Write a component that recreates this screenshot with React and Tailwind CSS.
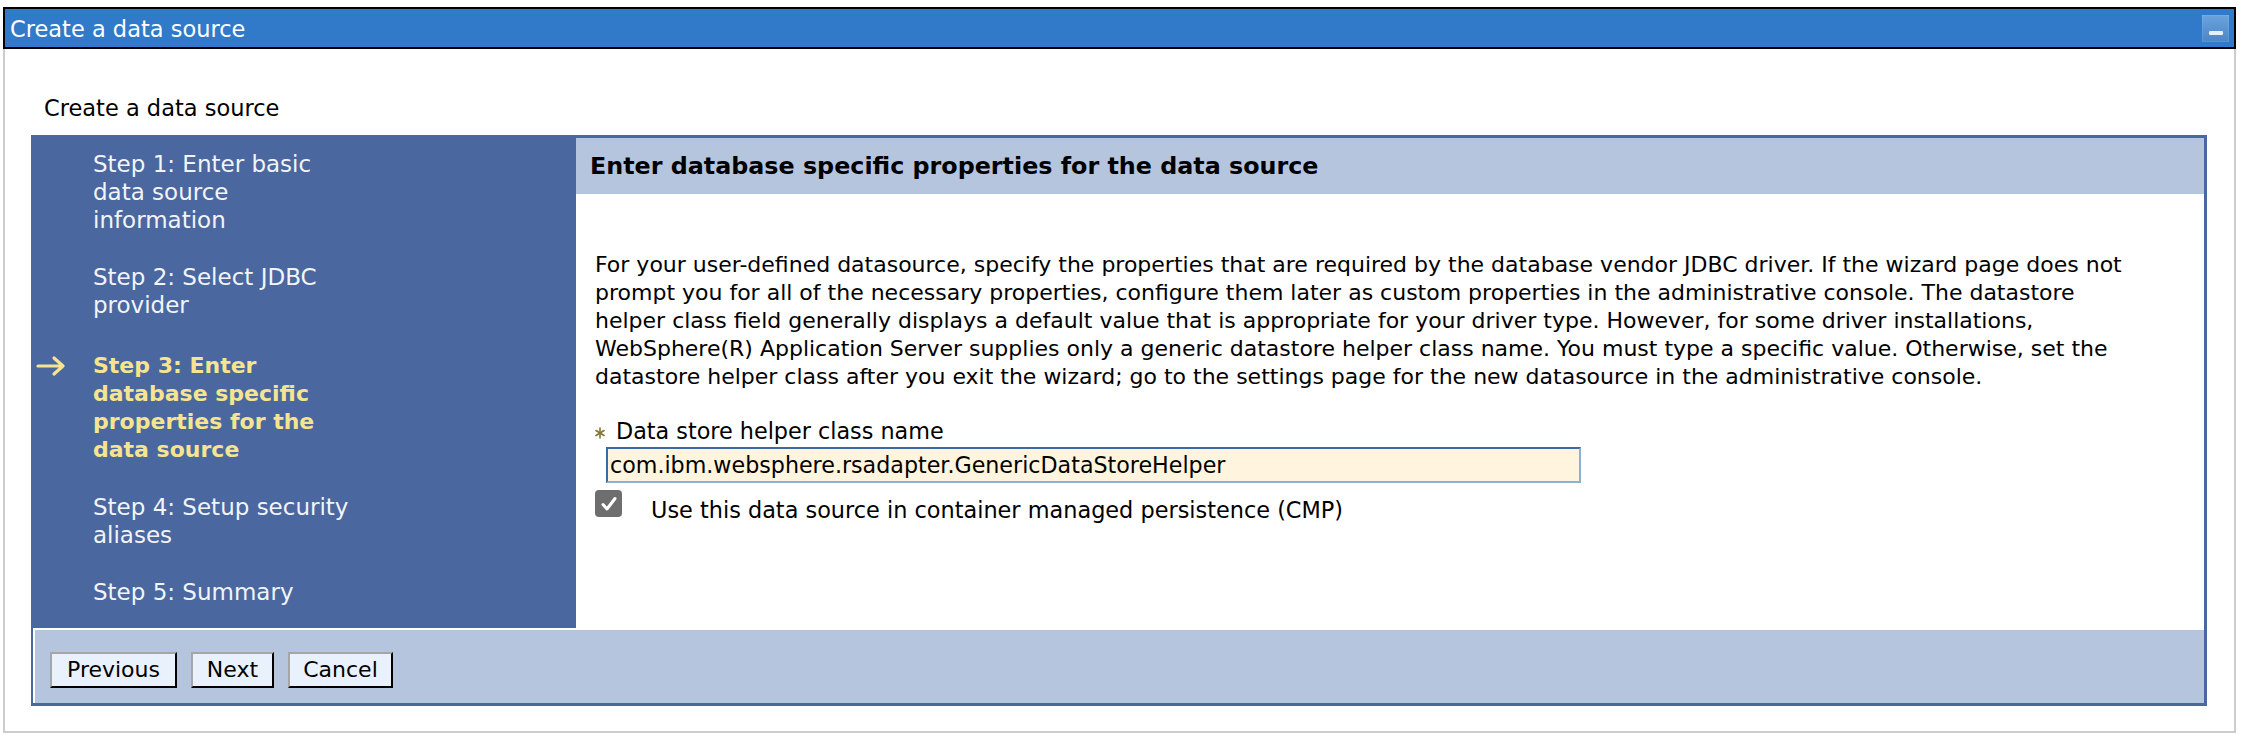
import React from "react";

const FONT = { fontFamily: '"DejaVu Sans", Verdana, sans-serif' };

function Step({ lines, active, extra }) {
  return (
    <div className={`relative mb-[29px] last:mb-0 ${extra || ""}`}>
      {active && (
        <svg
          className="absolute left-[-57px] top-[7px]"
          width="31"
          height="22"
          viewBox="0 0 31 22"
        >
          <path
            d="M2 11 H27 M18 3 L27 11 L18 19"
            fill="none"
            stroke="#f6e48f"
            strokeWidth="3.2"
            strokeLinecap="round"
            strokeLinejoin="round"
          />
        </svg>
      )}
      {lines.map((l, i) => (
        <div
          key={i}
          className={
            active
              ? "whitespace-nowrap text-[22px] font-bold text-[#f6e48f]"
              : "whitespace-nowrap text-[23px] text-[#f2f4f8]"
          }
        >
          {l}
        </div>
      ))}
    </div>
  );
}

function Btn({ children, w }) {
  return (
    <button
      className={`h-[36px] ${w} border-2 border-t-[#a6a6a6] border-l-[#a6a6a6] border-b-black border-r-black bg-[#e9f1fd] text-[22px] leading-[28px] text-black`}
      style={FONT}
    >
      {children}
    </button>
  );
}

export default function App() {
  const para = [
    "For your user-defined datasource, specify the properties that are required by the database vendor JDBC driver. If the wizard page does not",
    "prompt you for all of the necessary properties, configure them later as custom properties in the administrative console. The datastore",
    "helper class field generally displays a default value that is appropriate for your driver type. However, for some driver installations,",
    "WebSphere(R) Application Server supplies only a generic datastore helper class name. You must type a specific value. Otherwise, set the",
    "datastore helper class after you exit the wizard; go to the settings page for the new datasource in the administrative console.",
  ];
  return (
    <div className="min-h-[738px] bg-white pt-[7px] pl-[3px]" style={FONT}>
      <div className="w-[2233px]">
        {/* Title bar */}
        <div className="relative flex h-[42px] items-center border-2 border-black bg-[#3179c9] pl-[5px]">
          <span className="mt-[2px] text-[22.5px] leading-[28px] text-white">Create a data source</span>
          <div className="absolute right-[5px] top-[6px] flex h-[27px] w-[27px] items-end justify-center bg-gradient-to-b from-[#6aa2dc] to-[#4a86c8] pb-[7px] shadow-[inset_0_0_2px_rgba(255,255,255,0.35)]">
            <div className="h-[4px] w-[14px] rounded-[1px] bg-[#e6efff]" />
          </div>
        </div>

        {/* Body */}
        <div className="border-x-2 border-b-2 border-[#cccccc] pt-[45px] pb-[25px]">
          <div className="pl-[39px] text-[22.5px] leading-[28px] text-black">Create a data source</div>

          <div className="ml-[26px] mt-[13px] w-[2176px] border-[3px] border-l-2 border-[#4a67a0]">
            <div className="flex h-[490px]">
              {/* Nav */}
              <div className="w-[543px] shrink-0 bg-[#4a67a0] pl-[60px] pt-[12px] leading-[28px]">
                <Step lines={["Step 1: Enter basic", "data source", "information"]} />
                <Step lines={["Step 2: Select JDBC", "provider"]} />
                <Step
                  active
                  extra="pt-[4px]"
                  lines={["Step 3: Enter", "database specific", "properties for the", "data source"]}
                />
                <Step lines={["Step 4: Setup security", "aliases"]} />
                <Step lines={["Step 5: Summary"]} />
              </div>
              {/* Content */}
              <div className="flex-1 bg-white">
                <div className="flex h-[56px] items-center bg-[#b5c5de] pl-[14px]">
                  <span className="text-[23.8px] font-bold leading-[28px] text-black">
                    Enter database specific properties for the data source
                  </span>
                </div>
                <div className="pl-[19px] pt-[57px] text-[22px] leading-[28px] text-black">
                  {para.map((l, i) => (
                    <div key={i} className="whitespace-nowrap">
                      {l}
                    </div>
                  ))}
                  <div className="mt-[26px] flex items-center">
                    <svg width="10" height="12" viewBox="0 0 10 12" className="mr-[11px] mt-[4px]">
                      <g stroke="#857532" strokeWidth="1.6" strokeLinecap="round">
                        <line x1="5" y1="1" x2="5" y2="11" />
                        <line x1="1" y1="3.5" x2="9" y2="8.5" />
                        <line x1="1" y1="8.5" x2="9" y2="3.5" />
                      </g>
                    </svg>
                    <span className="text-[22.3px]">Data store helper class name</span>
                  </div>
                  <div className="ml-[11px] mt-[2px] flex h-[36px] w-[975px] items-center border-2 border-t-[#3b6aa3] border-l-[#3b6aa3] border-b-[#8eb0d4] border-r-[#8eb0d4] bg-[#fff5de] pl-[2px] text-[22.2px]">
                    com.ibm.websphere.rsadapter.GenericDataStoreHelper
                  </div>
                  <div className="mt-[7px] flex items-start">
                    <div className="flex h-[27px] w-[27px] items-center justify-center rounded-[4px] bg-[#6e6e6e]">
                      <svg width="18" height="16" viewBox="0 0 18 16">
                        <path
                          d="M3 8.5 L7 13 L15 2.5"
                          fill="none"
                          stroke="#ffffff"
                          strokeWidth="3"
                          strokeLinecap="round"
                          strokeLinejoin="round"
                        />
                      </svg>
                    </div>
                    <span className="ml-[29px] pt-[6px] text-[22.4px]">
                      Use this data source in container managed persistence (CMP)
                    </span>
                  </div>
                </div>
              </div>
            </div>
            {/* Footer */}
            <div className="flex h-[75px] gap-[14px] border-t-2 border-l-2 border-white bg-[#b5c5de] pl-[15px] pt-[22px]">
              <Btn w="w-[127px]">Previous</Btn>
              <Btn w="w-[83px]">Next</Btn>
              <Btn w="w-[105px]">Cancel</Btn>
            </div>
          </div>
        </div>
      </div>
    </div>
  );
}
